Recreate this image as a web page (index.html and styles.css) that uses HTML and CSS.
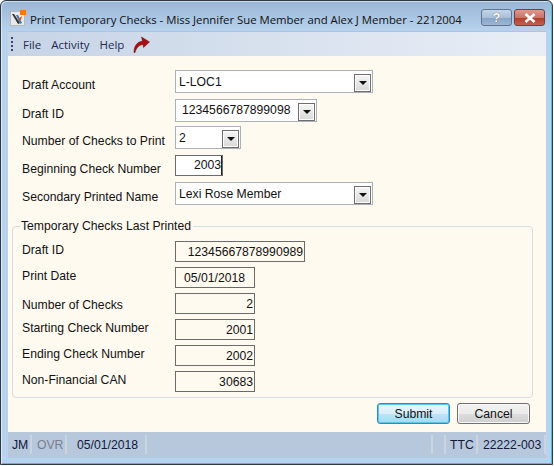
FILE: index.html
```html
<!DOCTYPE html>
<html lang="en">
<head>
    <meta charset="UTF-8">
    <title>Print Temporary Checks</title>
    <link rel="stylesheet" href="styles.css">
</head>
<body>
    <div class="window">
        <div class="titlebar">
            <svg class="app-icon" width="16" height="16" viewBox="0 0 16 16">
                <rect x="0.5" y="1.5" width="14" height="14" fill="#e9e9e9" stroke="#a5a5a5" stroke-width="0.6"/>
                <rect x="10" y="0" width="6" height="5" fill="#f27a12"/>
                <path d="M2 4 L4 4 L10 13 L8 14 Z" fill="#2f343b"/>
                <path d="M6 5 L8 5 L12 13 L10 14 Z" fill="#4a77a8"/>
                <path d="M8 9 L12 6 L11 10 Z" fill="#d8551a"/>
            </svg>
            <span class="title-text">Print Temporary Checks - Miss Jennifer Sue Member and Alex J Member - 2212004</span>
            <div class="caption-btns">
                <div class="cap-btn cap-help">?</div>
                <div class="cap-btn cap-close">
                    <svg width="14" height="10" viewBox="0 0 14 10">
                        <path d="M2.5 1 L11.5 9 M11.5 1 L2.5 9" stroke="#fff" stroke-width="2.6"/>
                    </svg>
                </div>
            </div>
        </div>

        <div class="client">
            <div class="toolbar">
                <div class="grip"><i></i><i></i><i></i><i></i></div>
                <span class="menu-item">File</span>
                <span class="menu-item">Activity</span>
                <span class="menu-item">Help</span>
                <svg class="redo-icon" width="17" height="17" viewBox="0 0 17 17">
                    <path d="M1 16.5 C1 10 4 6 9.5 5 L8.5 1 L16.5 6 L10.5 11.5 L10 8.5 C6 9 3.5 11.5 2 16.5 Z" fill="#a80f12" stroke="#6e0a0c" stroke-width="0.5"/>
                </svg>
            </div>

            <div class="content">
                <div class="form-rows">
                    <div class="row">
                        <label>Draft Account</label>
                        <div class="combo combo-wide">
                            <span class="combo-text">L-LOC1</span>
                            <span class="combo-btn"></span>
                        </div>
                    </div>
                    <div class="row row-draft">
                        <label>Draft ID</label>
                        <div class="combo combo-id">
                            <span class="combo-text indent">1234566787899098</span>
                            <span class="combo-btn"></span>
                        </div>
                    </div>
                    <div class="row row-count">
                        <label>Number of Checks to Print</label>
                        <div class="combo combo-small">
                            <span class="combo-text">2</span>
                            <span class="combo-btn"></span>
                        </div>
                    </div>
                    <div class="row row-begin">
                        <label>Beginning Check Number</label>
                        <div class="field"><span class="caret">2003</span></div>
                    </div>
                    <div class="row row-second">
                        <label>Secondary Printed Name</label>
                        <div class="combo combo-wide">
                            <span class="combo-text">Lexi Rose Member</span>
                            <span class="combo-btn"></span>
                        </div>
                    </div>
                </div>

                <fieldset class="group">
                    <legend>Temporary Checks Last Printed</legend>
                    <div class="last-row">
                        <label>Draft ID</label>
                        <div class="output output-id">12345667878990989</div>
                    </div>
                    <div class="last-row">
                        <label>Print Date</label>
                        <div class="output output-date">05/01/2018</div>
                    </div>
                    <div class="last-row">
                        <label class="low">Number of Checks</label>
                        <div class="output">2</div>
                    </div>
                    <div class="last-row">
                        <label>Starting Check Number</label>
                        <div class="output">2001</div>
                    </div>
                    <div class="last-row">
                        <label>Ending Check Number</label>
                        <div class="output">2002</div>
                    </div>
                    <div class="last-row">
                        <label>Non-Financial CAN</label>
                        <div class="output">30683</div>
                    </div>
                </fieldset>

                <div class="actions">
                    <button class="btn btn-default">Submit</button>
                    <button class="btn">Cancel</button>
                </div>
            </div>

            <div class="statusbar">
                <span class="st st-user">JM</span>
                <span class="st st-ovr">OVR</span>
                <span class="st st-date">05/01/2018</span>
                <span class="st st-fill"></span>
                <span class="st st-gap"></span>
                <span class="st st-ttc">TTC</span>
                <span class="st st-code">22222-003</span>
            </div>
        </div>
    </div>
</body>
</html>
```

FILE: styles.css
```css
* {
    margin: 0;
    padding: 0;
    box-sizing: border-box;
}

body {
    width: 554px;
    height: 466px;
    overflow: hidden;
    background: #fff;
    font-family: "Liberation Sans", Arial, sans-serif;
    font-size: 12.2px;
    color: #111;
}

.window {
    width: 553px;
    height: 465px;
    border: 1px solid #2b3a45;
    border-radius: 6px 6px 0 0;
    background: linear-gradient(to bottom, #9ab6d5 0, #b9d3ee 31px, #b9d3ee 100%);
    padding: 0 6px 6px 7px;
    display: flex;
    flex-direction: column;
    box-shadow: inset 1px 1px 0 rgba(255,255,255,0.5), inset -1px -1px 0 #3cc3e4;
}

.titlebar {
    height: 30px;
    display: flex;
    align-items: center;
    flex-shrink: 0;
}

.app-icon {
    flex-shrink: 0;
    margin: 4px 4px 0 2px;
}

.title-text {
    font-family: "Open Sans", sans-serif;
    font-size: 11.35px;
    color: #101010;
    white-space: nowrap;
    flex: 1;
    min-width: 0;
    margin-top: 6px;
}

.caption-btns {
    display: flex;
    flex-shrink: 0;
    gap: 2px;
    margin: 3px 1px 0 0;
}

.cap-btn {
    width: 31px;
    height: 17px;
    border: 1px solid #5f7690;
    border-radius: 3px;
    display: flex;
    align-items: center;
    justify-content: center;
}

.cap-help {
    background: linear-gradient(to bottom, #c4d5e8 0, #a9c0da 50%, #88a5c6 51%, #9cb6d3 100%);
    color: #fff;
    font-weight: bold;
    font-size: 13px;
    text-shadow: 0 0 1px #333;
}

.cap-close {
    background: linear-gradient(to bottom, #dc9a8f 0, #ca7366 50%, #b23c2a 51%, #c2604f 100%);
    border-color: #7c3b36;
}

.client {
    flex: 1;
    display: flex;
    flex-direction: column;
    min-height: 0;
}

.toolbar {
    height: 25px;
    flex-shrink: 0;
    display: flex;
    align-items: center;
    background: linear-gradient(to right, #c6d4e6, #e9eef6);
    border-top: 1px solid #a9c6ea;
}

.grip {
    width: 2px;
    margin-left: 3px;
    margin-right: 10px;
    display: flex;
    flex-direction: column;
    gap: 2px;
}

.grip i {
    display: block;
    width: 2px;
    height: 2px;
    background: #33467a;
}

.menu-item {
    font-family: "Open Sans", sans-serif;
    font-size: 11.5px;
    color: #1e2a52;
    margin-right: 10px;
}

.redo-icon {
    flex-shrink: 0;
    margin-left: -1px;
}

.content {
    flex: 1;
    background: #fffaf0;
    padding: 14px 13px 0 4px;
    display: flex;
    flex-direction: column;
}

.form-rows {
    padding-left: 10px;
}

.row {
    display: flex;
    align-items: center;
}

.row label {
    width: 153px;
    flex-shrink: 0;
    padding-top: 6px;
}

.row-draft { margin-top: 6px; }
.row-count { margin-top: 4px; }
.row-begin { margin-top: 6px; }
.row-second { margin-top: 6px; }

.combo {
    height: 23px;
    border: 1px solid #a9b2bb;
    background: #fff;
    display: flex;
    align-items: center;
    padding: 0 1px 0 3px;
}

.combo-wide { width: 198px; }
.combo-id { width: 142px; }
.combo-small { width: 66px; }

.combo-text {
    flex: 1;
    white-space: nowrap;
}

.combo-text.indent {
    padding-left: 3px;
    margin-top: -1px;
}

.combo-btn {
    position: relative;
    width: 17px;
    height: 18px;
    flex-shrink: 0;
    margin-top: 2px;
    border: 1px solid #6e6e6e;
    background: linear-gradient(to bottom, #f6f6f6, #d8d8d8);
    box-shadow: inset 0 0 0 1px #fff;
}

.combo-btn::after {
    content: "";
    position: absolute;
    left: 4px;
    top: 6px;
    border-left: 4px solid transparent;
    border-right: 4px solid transparent;
    border-top: 4px solid #111;
}

.field {
    width: 48px;
    height: 21px;
    border: 1px solid #6b6b6b;
    background: #fff;
    text-align: right;
}

.caret {
    display: inline-block;
    height: 19px;
    line-height: 19px;
    border-right: 1px solid #222;
}

.group {
    margin-top: 14px;
    width: 521px;
    height: 179px;
    border: 1px solid #d5dde3;
    border-radius: 4px;
    padding: 8px 0 0 9px;
    min-width: 0;
}

.group legend {
    margin-left: -2px;
    padding: 0 2px 0 1px;
    line-height: 14px;
}

.last-row {
    display: flex;
    align-items: flex-start;
    height: 26px;
}

.last-row label {
    width: 153px;
    flex-shrink: 0;
    padding-top: 2px;
}

.last-row label.low {
    padding-top: 5px;
}

.output {
    width: 80px;
    height: 21px;
    border: 1px solid #6b6b6b;
    text-align: right;
    line-height: 21px;
    padding-right: 1px;
}

.output-id {
    width: 130px;
}

.output-date {
    text-align: center;
}

.actions {
    display: flex;
    justify-content: flex-end;
    gap: 7px;
    margin-top: 5px;
    padding-right: 3px;
}

.btn {
    width: 73px;
    height: 21px;
    border: 1px solid #707070;
    border-radius: 3px;
    background: linear-gradient(to bottom, #f2f2f2 0, #ebebeb 50%, #dddddd 51%, #cfcfcf 100%);
    font-family: "Liberation Sans", Arial, sans-serif;
    font-size: 12.2px;
    color: #111;
    box-shadow: inset 0 0 0 1px #f8f8f8;
}

.btn-default {
    border-color: #2c8dbd;
    background: linear-gradient(to bottom, #e9f6fd 0, #d8eefb 50%, #bde4f8 51%, #a6d9f4 100%);
    box-shadow: inset 0 0 0 1px #5cc3ee;
}

.statusbar {
    height: 26px;
    flex-shrink: 0;
    background: #b7c8dd;
    display: flex;
    align-items: stretch;
    padding: 3px 0 4px;
}

.st {
    display: flex;
    align-items: center;
    border-right: 2px solid #cbd4df;
    white-space: nowrap;
    padding-top: 1px;
    color: #12183a;
}

.st-user { width: 24px; padding-left: 4px; }
.st-ovr { width: 35px; padding-left: 5px; color: #78808c; }
.st-date { width: 80px; padding-left: 10px; }
.st-fill { flex: 1; }
.st-gap { width: 13px; }
.st-ttc { width: 32px; padding-left: 4px; }
.st-code { width: 68px; padding-left: 5px; }
```
